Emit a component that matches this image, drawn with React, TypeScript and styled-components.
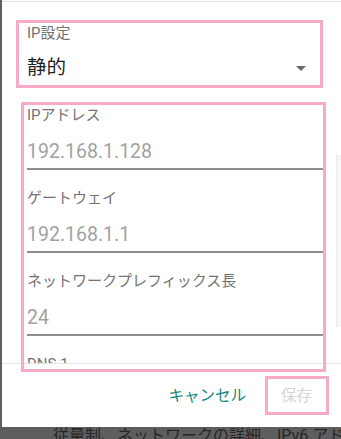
import React from 'react';
import styled, { createGlobalStyle } from 'styled-components';

const GlobalStyle = createGlobalStyle`
  html, body {
    margin: 0;
    padding: 0;
  }
  body {
    background: #5e5e5e;
    font-family: Roboto, "Noto Sans CJK JP", sans-serif;
  }
`;

const Screen = styled.div`
  position: relative;
  width: 341px;
  height: 439px;
  overflow: hidden;
  background: #5e5e5e;
  display: flex;
  flex-direction: column;
`;

const Dialog = styled.div`
  margin-left: 2px;
  height: 427px;
  flex-shrink: 0;
  background: #ffffff;
  display: flex;
  flex-direction: column;
`;

const ScrollArea = styled.div`
  margin-top: 1px;
  height: 361px;
  border-top: 1px solid #e2e2e2;
  padding: 0 18px 0 25px;
  overflow: hidden;
  flex-shrink: 0;
`;

const SpinnerBlock = styled.div`
  padding-bottom: 5px;
`;

const SpinnerLabel = styled.div`
  margin-top: 21px;
  font-size: 15px;
  line-height: 20px;
  color: #737373;
`;

const SpinnerRow = styled.div`
  margin-top: 11px;
  height: 28px;
  display: flex;
  align-items: center;
  justify-content: space-between;
  padding-right: 17px;
`;

const SpinnerValue = styled.span`
  font-size: 19.5px;
  line-height: 28px;
  color: #1f1f1f;
`;

const Field = styled.div`
  display: flex;
  flex-direction: column;
`;

const FieldLabel = styled.div`
  margin-top: 18px;
  font-size: 15px;
  line-height: 20px;
  color: #737373;
  white-space: nowrap;
`;

const FieldValue = styled.div`
  margin-top: 13px;
  font-size: 19.5px;
  line-height: 28px;
  color: #a2a2a2;
  padding-bottom: 2px;
  border-bottom: 2px solid #8e8e8e;
`;

const Footer = styled.div`
  flex: 1;
  border-top: 1px solid #e6e6e6;
  display: flex;
  align-items: center;
  justify-content: flex-end;
  gap: 35px;
  padding-right: 29px;
`;

const TextButton = styled.button<{ $disabled?: boolean }>`
  border: 0;
  background: none;
  padding: 0;
  font-family: inherit;
  font-size: 15.5px;
  line-height: 22px;
  color: ${(p) => (p.$disabled ? '#d4d4d4' : '#0f897c')};
`;

const BehindText = styled.div`
  padding-left: 53px;
  font-size: 16px;
  line-height: 18px;
  color: #262626;
  white-space: nowrap;
`;

const ScrollThumb = styled.div`
  position: absolute;
  left: 336px;
  top: 155px;
  width: 4px;
  height: 172px;
  background: #f7f7f7;
  border-left: 1px solid #ebebeb;
`;

const Highlight = styled.div<{ $x: number; $y: number; $w: number; $h: number }>`
  position: absolute;
  left: ${(p) => p.$x}px;
  top: ${(p) => p.$y}px;
  width: ${(p) => p.$w}px;
  height: ${(p) => p.$h}px;
  box-sizing: border-box;
  border: 3px solid #f9aac9;
  pointer-events: none;
`;

const Caret = () => (
  <svg width="10" height="5" viewBox="0 0 10 5">
    <polygon points="0,0 10,0 5,5" fill="#686868" />
  </svg>
);

const fields = [
  { label: 'IPアドレス', value: '192.168.1.128' },
  { label: 'ゲートウェイ', value: '192.168.1.1' },
  { label: 'ネットワークプレフィックス長', value: '24' },
  { label: 'DNS 1', value: '8.8.8.8' },
];

export default function App() {
  return (
    <>
      <GlobalStyle />
      <Screen>
        <Dialog>
          <ScrollArea>
            <SpinnerBlock>
              <SpinnerLabel>IP設定</SpinnerLabel>
              <SpinnerRow>
                <SpinnerValue>静的</SpinnerValue>
                <Caret />
              </SpinnerRow>
            </SpinnerBlock>
            {fields.map((f) => (
              <Field key={f.label}>
                <FieldLabel>{f.label}</FieldLabel>
                <FieldValue>{f.value}</FieldValue>
              </Field>
            ))}
          </ScrollArea>
          <Footer>
            <TextButton>キャンセル</TextButton>
            <TextButton $disabled>保存</TextButton>
          </Footer>
        </Dialog>
        <BehindText>従量制、ネットワークの詳細、IPv6 アドレス</BehindText>
        <ScrollThumb />
        <Highlight $x={16} $y={20} $w={307} $h={68} />
        <Highlight $x={21} $y={102} $w={305} $h={270} />
        <Highlight $x={265} $y={376} $w={64} $h={39} />
      </Screen>
    </>
  );
}
